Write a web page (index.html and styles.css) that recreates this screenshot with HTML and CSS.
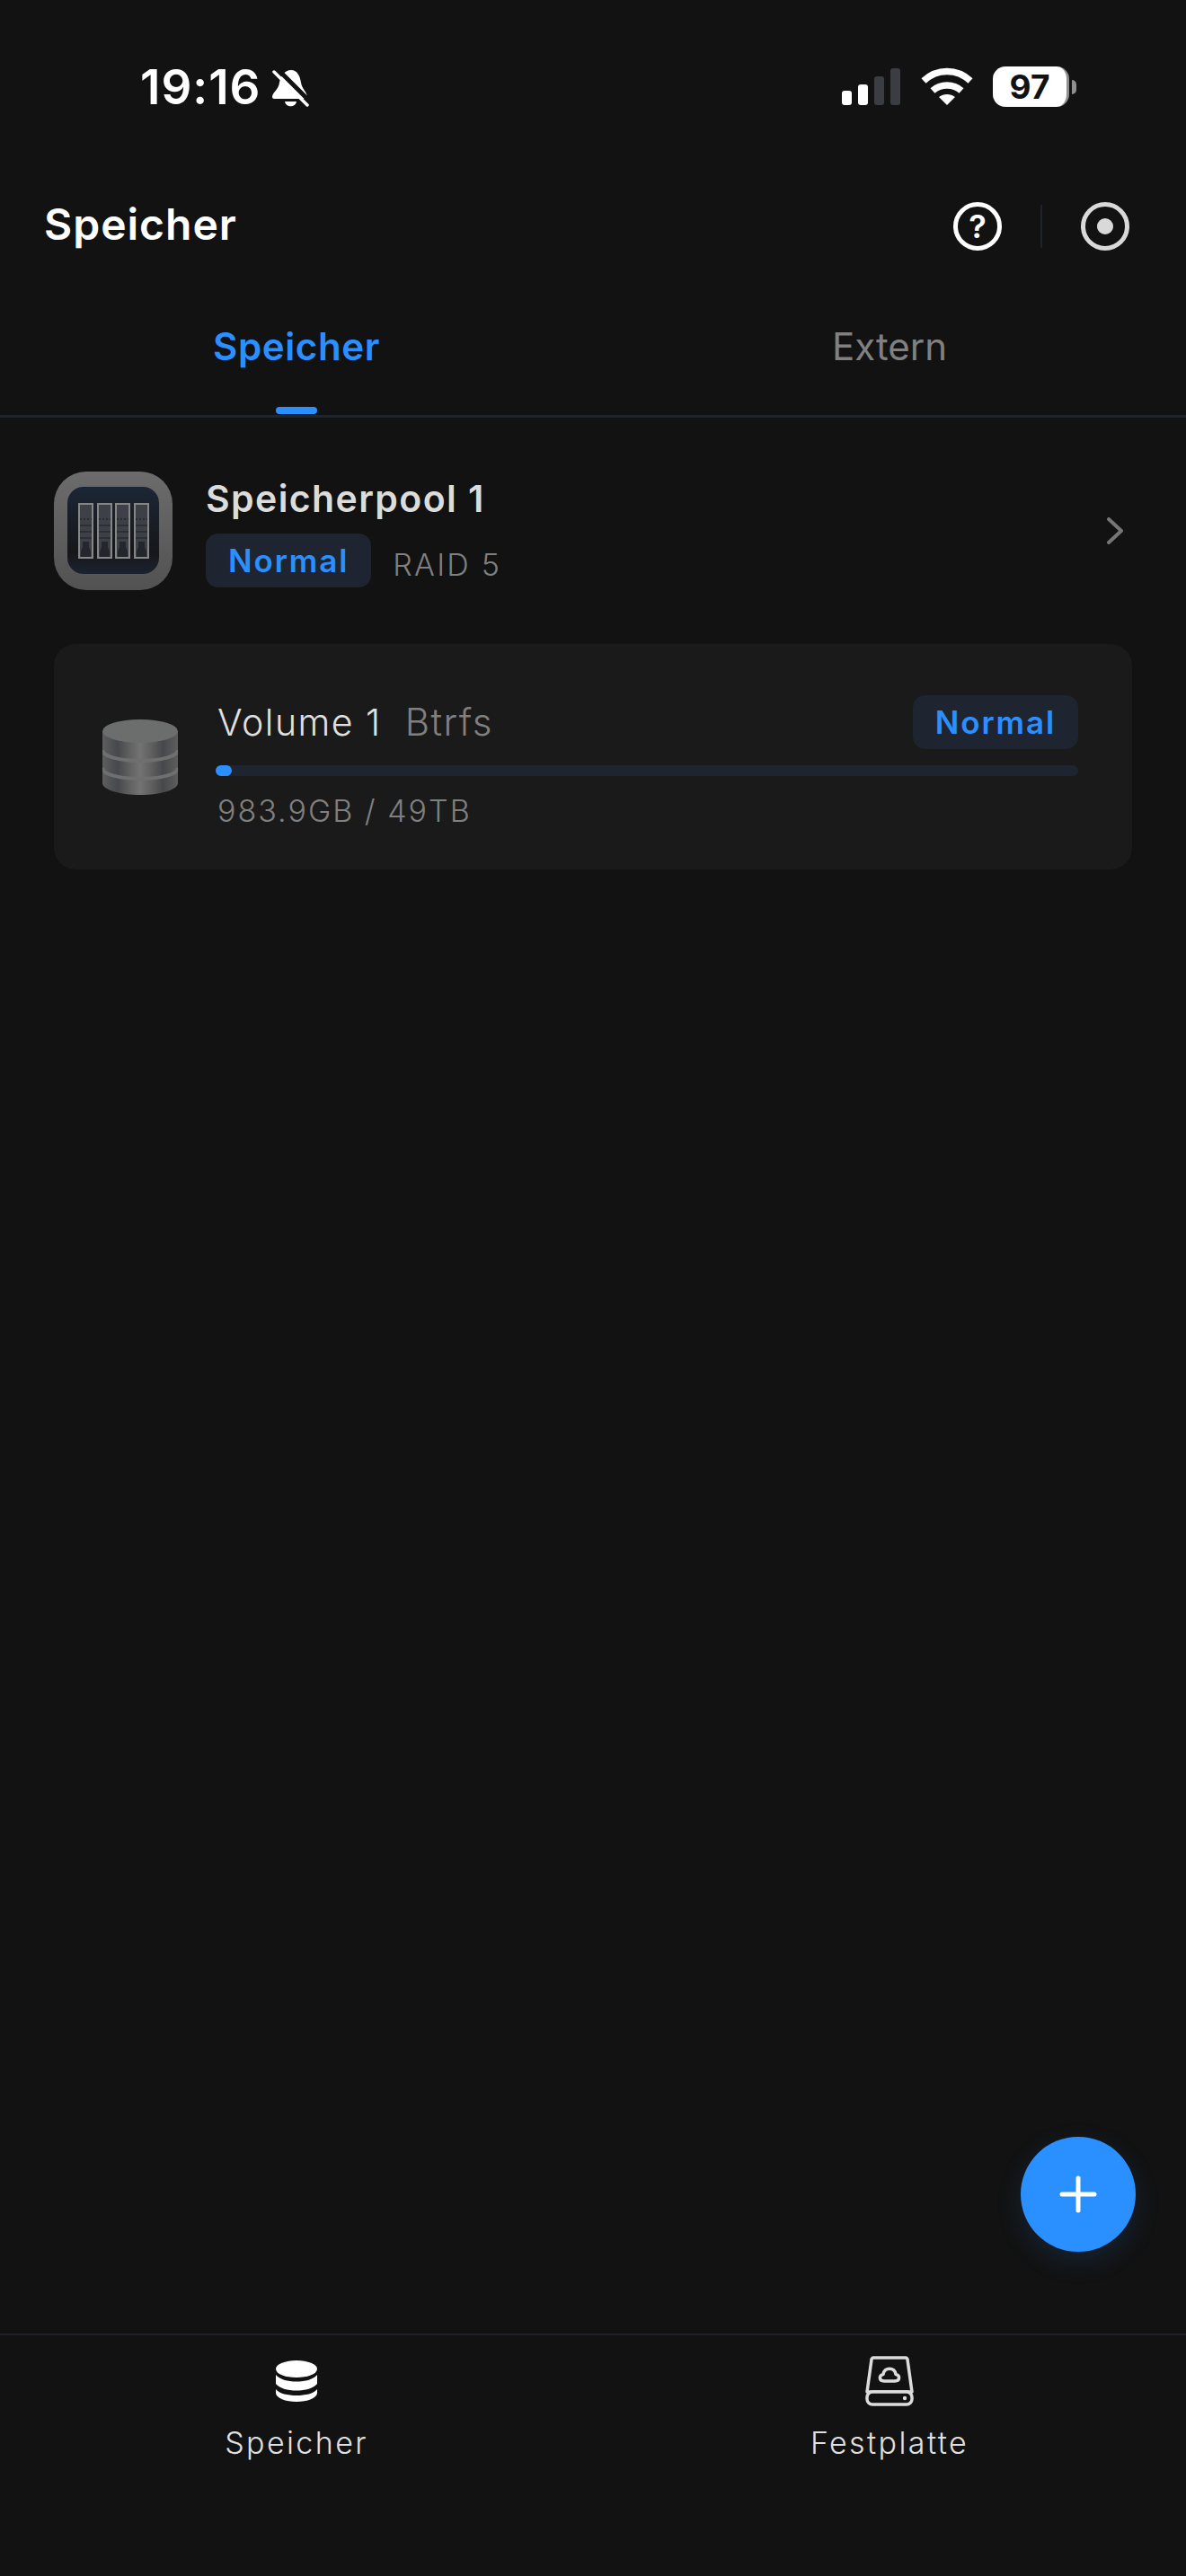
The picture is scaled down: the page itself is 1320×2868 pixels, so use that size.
FILE: index.html
```html
<!DOCTYPE html>
<html lang="de">
<head>
  <meta charset="UTF-8" />
  <meta name="viewport" content="width=device-width, initial-scale=1.0"/>
  <title>Speicher</title>
  <link rel="stylesheet" href="styles.css">
</head>
<body>

  <!-- Status Bar -->
  <div class="status-bar">
    <div class="status-left">
      <span class="time">19:16</span>
      <svg class="bell" viewBox="0 0 42 43">
        <path fill="#fff" d="M22 1C29 1 32 8 33 15C34 22 40 26 40 31C40 33 38 33 37 33H5C3 33 1 33 1 31C1 26 8 23 9 15C10 8 15 1 22 1Z"/>
        <path fill="#fff" d="M15 36H28C27 43 16 43 15 36Z"/>
        <path stroke="#121212" stroke-width="5" d="M7 0L46 39"/>
        <path stroke="#fff" stroke-width="3.5" stroke-linecap="round" d="M3 3L40 40"/>
      </svg>
    </div>
    <div class="status-right">
      <div class="signal">
        <span class="bar bar1"></span>
        <span class="bar bar2"></span>
        <span class="bar bar3"></span>
        <span class="bar bar4"></span>
      </div>
      <svg class="wifi" viewBox="0 0 58 42">
        <path fill="none" stroke="#fff" stroke-width="7.5" d="M3 15C18 1 40 1 55 15"/>
        <path fill="none" stroke="#fff" stroke-width="7.5" d="M13 26C22 18 36 18 45 26"/>
        <path fill="#fff" d="M20 33C25 29 33 29 38 33L29 42Z"/>
      </svg>
      <div class="battery">
        <div class="battery-body">97</div>
        <div class="battery-nub"></div>
      </div>
    </div>
  </div>

  <!-- Header -->
  <div class="header">
    <div class="header-title">Speicher</div>
    <div class="header-actions">
      <span class="help-icon">?</span>
      <span class="header-divider"></span>
      <span class="record-icon"><span class="record-dot"></span></span>
    </div>
  </div>

  <!-- Tabs -->
  <div class="tabs">
    <div class="tab active">Speicher</div>
    <div class="tab">Extern</div>
  </div>

  <!-- Content -->
  <div class="content">
    <div class="pool-row">
      <svg class="pool-icon" viewBox="0 0 132 132">
        <defs>
          <linearGradient id="poolOuter" x1="0" y1="0" x2="0" y2="1">
            <stop offset="0" stop-color="#6c6c6c"/>
            <stop offset="1" stop-color="#525252"/>
          </linearGradient>
          <linearGradient id="poolInner" x1="0" y1="0" x2="0" y2="1">
            <stop offset="0" stop-color="#1b2635"/>
            <stop offset="0.75" stop-color="#161719"/>
            <stop offset="1" stop-color="#1b2230"/>
          </linearGradient>
          <g id="slot">
            <rect x="1" y="1" width="15" height="60" fill="#3d4046" stroke="#868686" stroke-width="2"/>
            <path fill="#23262c" d="M5 43H12V49L14 54V60H3V54L5 49Z"/>
            <path stroke="#15171b" stroke-width="1" stroke-dasharray="2 2" d="M2 18H15"/>
            <path stroke="#1d1f23" stroke-width="1" d="M2 25H15M2 32H15M2 39H15"/>
          </g>
        </defs>
        <rect width="132" height="132" rx="36" fill="url(#poolOuter)"/>
        <rect x="15" y="17" width="102" height="97" rx="18" fill="url(#poolInner)"/>
        <use href="#slot" x="27" y="35"/>
        <use href="#slot" x="48" y="35"/>
        <use href="#slot" x="68" y="35"/>
        <use href="#slot" x="89" y="35"/>
      </svg>
      <div class="pool-info">
        <div class="pool-name">Speicherpool 1</div>
        <div class="pool-meta">
          <span class="badge">Normal</span>
          <span class="raid">RAID 5</span>
        </div>
      </div>
      <svg class="chevron" viewBox="0 0 18 30">
        <path fill="none" stroke="#767676" stroke-width="4" stroke-linecap="round" stroke-linejoin="round" d="M2 2L16 15L2 28"/>
      </svg>
    </div>

    <div class="volume-card">
      <svg class="volume-icon" viewBox="0 0 84 84">
        <defs>
          <linearGradient id="volBody" x1="0" y1="0" x2="1" y2="0">
            <stop offset="0" stop-color="#5e5e5e"/>
            <stop offset="0.2" stop-color="#46484c"/>
            <stop offset="0.33" stop-color="#5c5c5c"/>
            <stop offset="0.5" stop-color="#737373"/>
            <stop offset="0.67" stop-color="#5c5c5c"/>
            <stop offset="0.8" stop-color="#46484c"/>
            <stop offset="1" stop-color="#5e5e5e"/>
          </linearGradient>
        </defs>
        <path fill="url(#volBody)" d="M0 13V71C0 78 19 84 42 84C65 84 84 78 84 71V13Z"/>
        <path fill="none" stroke="#6f6f6f" stroke-width="4" d="M0 34C0 41 19 46 42 46C65 46 84 41 84 34"/>
        <path fill="none" stroke="#6f6f6f" stroke-width="4" d="M0 54C0 61 19 66 42 66C65 66 84 61 84 54"/>
        <ellipse cx="42" cy="13" rx="42" ry="13" fill="#6c6d6d"/>
      </svg>
      <div class="volume-info">
        <div class="volume-top">
          <div class="volume-name">Volume 1<span class="volume-fs">Btrfs</span></div>
          <span class="badge">Normal</span>
        </div>
        <div class="progress"><div class="progress-fill" style="width: 18px"></div></div>
        <div class="volume-size">983.9GB / 49TB</div>
      </div>
    </div>

    <!-- Add Button -->
    <div class="fab">
      <svg viewBox="0 0 42 42">
        <path stroke="#fff" stroke-width="5" stroke-linecap="round" d="M21 3V39M3 21H39"/>
      </svg>
    </div>
  </div>

  <!-- Bottom Nav -->
  <div class="bottom-nav">
    <div class="nav-item">
      <div class="nav-icon-box">
        <svg class="nav-icon-db" viewBox="0 0 46 46">
          <ellipse cx="23" cy="9.500" rx="23" ry="9.500" fill="#fff"/>
          <path fill="#fff" d="M0 16C4 21 13 23.500 23 23.500C33 23.500 42 21 46 16V26C42 31 33 33.500 23 33.500C13 33.500 4 31 0 26Z"/>
          <path fill="#fff" d="M0 32C4 37 13 39 23 39C33 39 42 37 46 32V36C46 42 35 46 23 46C11 46 0 42 0 36Z"/>
        </svg>
      </div>
      <span class="nav-label">Speicher</span>
    </div>
    <div class="nav-item">
      <div class="nav-icon-box">
        <svg class="nav-icon-disk" viewBox="0 0 54 56">
          <path fill="none" stroke="#dcdcdc" stroke-width="3.500" stroke-linejoin="round" d="M9 2H45C46 2 47 3 47 4L52 40H2L7 4C7 3 8 2 9 2Z"/>
          <rect x="2" y="40" width="50" height="14" rx="6" fill="#121212" stroke="#dcdcdc" stroke-width="3.500"/>
          <circle cx="44" cy="47" r="2.200" fill="#dcdcdc"/>
          <path fill="none" stroke="#dcdcdc" stroke-width="3.500" stroke-linejoin="round" d="M21 28C15 28 15 21 20 20.500C21 12 33 12 34 20.500C39 21 39 28 33 28Z"/>
        </svg>
      </div>
      <span class="nav-label">Festplatte</span>
    </div>
  </div>

</body>
</html>
```

FILE: styles.css
```css
* {
  margin: 0;
  padding: 0;
  box-sizing: border-box;
}

body {
  font-family: Inter, "Liberation Sans", sans-serif;
  background-color: #121212;
  color: #dcdcdc;
  display: flex;
  flex-direction: column;
  height: 100vh;
  overflow: hidden;
}

/* Status bar */
.status-bar {
  height: 190px;
  padding: 74px 122px 0 156px;
  display: flex;
  justify-content: space-between;
  align-items: flex-start;
  flex-shrink: 0;
}

.status-left {
  display: flex;
  align-items: center;
  height: 46px;
  gap: 11px;
}

.time {
  font-size: 53px;
  font-weight: 600;
  letter-spacing: 1px;
  line-height: 46px;
  color: #fff;
}

.bell {
  width: 42px;
  height: 43px;
  margin-top: 2px;
}

.status-right {
  display: flex;
  align-items: flex-start;
  height: 46px;
}

.signal {
  display: flex;
  align-items: flex-end;
  gap: 7px;
  height: 41px;
  margin: 2px 23px 0 0;
}

.bar {
  width: 11px;
  border-radius: 3px;
  background-color: #fff;
}

.bar1 { height: 16px; }
.bar2 { height: 23px; }
.bar3 { height: 32px; background-color: #3a3d42; }
.bar4 { height: 41px; background-color: #3a3d42; }

.wifi {
  width: 58px;
  height: 42px;
  margin: 1px 22px 0 0;
}

.battery {
  display: flex;
  align-items: center;
  gap: 3px;
}

.battery-body {
  width: 85px;
  height: 45px;
  border-radius: 14px;
  background-color: #fff;
  border-right: 3px solid #8f8f8f;
  color: #121212;
  font-size: 37px;
  font-weight: 700;
  line-height: 45px;
  text-align: center;
}

.battery-nub {
  width: 5px;
  height: 16px;
  border-radius: 0 8px 8px 0;
  background-color: #8f8f8f;
}

/* Header */
.header {
  height: 120px;
  padding: 0 63px 2px 49px;
  display: flex;
  justify-content: space-between;
  align-items: center;
  flex-shrink: 0;
}

.header-title {
  font-size: 48px;
  font-weight: 600;
  letter-spacing: 1px;
  color: #fff;
}

.header-actions {
  display: flex;
  align-items: center;
  margin-top: 6px;
}

.help-icon {
  width: 54px;
  height: 54px;
  border: 5px solid #fff;
  border-radius: 50%;
  color: #fff;
  font-size: 36px;
  font-weight: 600;
  line-height: 44px;
  text-align: center;
}

.header-divider {
  width: 2px;
  height: 48px;
  margin: 0 43px;
  background-color: #1f232b;
}

.record-icon {
  width: 54px;
  height: 54px;
  border: 5px solid #d9d9d9;
  border-radius: 50%;
  display: flex;
  justify-content: center;
  align-items: center;
}

.record-dot {
  width: 18px;
  height: 18px;
  border-radius: 50%;
  background-color: #d9d9d9;
}

/* Tabs */
.tabs {
  height: 155px;
  padding-bottom: 1px;
  display: flex;
  border-bottom: 3px solid #20242b;
  flex-shrink: 0;
}

.tab {
  flex: 1;
  display: flex;
  justify-content: center;
  align-items: center;
  position: relative;
  font-size: 42px;
  color: #808080;
}

.tab.active {
  color: #2b8fff;
  font-weight: 600;
  letter-spacing: 0.6px;
}

.tab.active::after {
  content: "";
  position: absolute;
  left: 50%;
  bottom: 0;
  width: 46px;
  height: 8px;
  margin-left: -23px;
  border-radius: 4px;
  background-color: #2b8fff;
}

/* Content */
.content {
  flex: 1;
  position: relative;
  padding: 60px 60px 0;
}

.pool-row {
  display: flex;
  align-items: center;
  gap: 37px;
}

.pool-icon {
  width: 132px;
  height: 132px;
  flex-shrink: 0;
}

.pool-info {
  flex: 1;
}

.pool-name {
  font-size: 41px;
  font-weight: 600;
  letter-spacing: 1.4px;
  line-height: 50px;
  color: #dcdcdc;
  margin-top: 2px;
}

.pool-meta {
  display: flex;
  align-items: center;
  gap: 24px;
  margin-top: 14px;
}

.badge {
  height: 60px;
  padding: 0 25px;
  border-radius: 14px;
  background-color: #1e2530;
  color: #2b8fff;
  font-size: 35px;
  font-weight: 600;
  letter-spacing: 1.9px;
  line-height: 60px;
}

.raid {
  font-size: 34px;
  letter-spacing: 2.2px;
  color: #808080;
  font-weight: 300;
  margin-top: 9px;
}

.chevron {
  width: 18px;
  height: 30px;
  margin-right: 10px;
}

.volume-card {
  margin-top: 60px;
  height: 251px;
  padding: 0 60px 0 54px;
  border-radius: 24px;
  background-color: #1a1a1a;
  display: flex;
  align-items: center;
  gap: 42px;
}

.volume-icon {
  width: 84px;
  height: 84px;
  flex-shrink: 0;
}

.volume-info {
  flex: 1;
  padding-top: 11px;
}

.volume-top {
  display: flex;
  justify-content: space-between;
  align-items: center;
  padding-left: 2px;
}

.volume-name {
  font-size: 41px;
  font-weight: 300;
  letter-spacing: 1.5px;
  color: #e0e0e0;
}

.volume-fs {
  margin-left: 26px;
  font-size: 42px;
  color: #808080;
}

.progress {
  height: 12px;
  margin-top: 18px;
  border-radius: 6px;
  background-color: #1e2530;
}

.progress-fill {
  height: 100%;
  border-radius: 6px;
  background-color: #2b8fff;
}

.volume-size {
  margin-top: 18px;
  padding-left: 2px;
  font-size: 34px;
  font-weight: 300;
  letter-spacing: 2px;
  color: #808080;
}

.fab {
  position: absolute;
  right: 56px;
  bottom: 91px;
  width: 128px;
  height: 128px;
  border-radius: 50%;
  background-color: #2b90ff;
  box-shadow: 0 10px 30px rgba(43, 144, 255, 0.14);
  display: flex;
  justify-content: center;
  align-items: center;
}

.fab svg {
  width: 42px;
  height: 42px;
}

/* Bottom nav */
.bottom-nav {
  height: 270px;
  display: flex;
  border-top: 2px solid #1f222a;
  flex-shrink: 0;
}

.nav-item {
  flex: 1;
  display: flex;
  flex-direction: column;
  align-items: center;
  padding-top: 23px;
}

.nav-icon-box {
  height: 56px;
  display: flex;
  align-items: center;
}

.nav-icon-db {
  width: 46px;
  height: 46px;
}

.nav-icon-disk {
  width: 54px;
  height: 56px;
}

.nav-label {
  margin-top: 20px;
  font-size: 34px;
  font-weight: 300;
  letter-spacing: 2.4px;
  color: #e0e0e0;
}
```
